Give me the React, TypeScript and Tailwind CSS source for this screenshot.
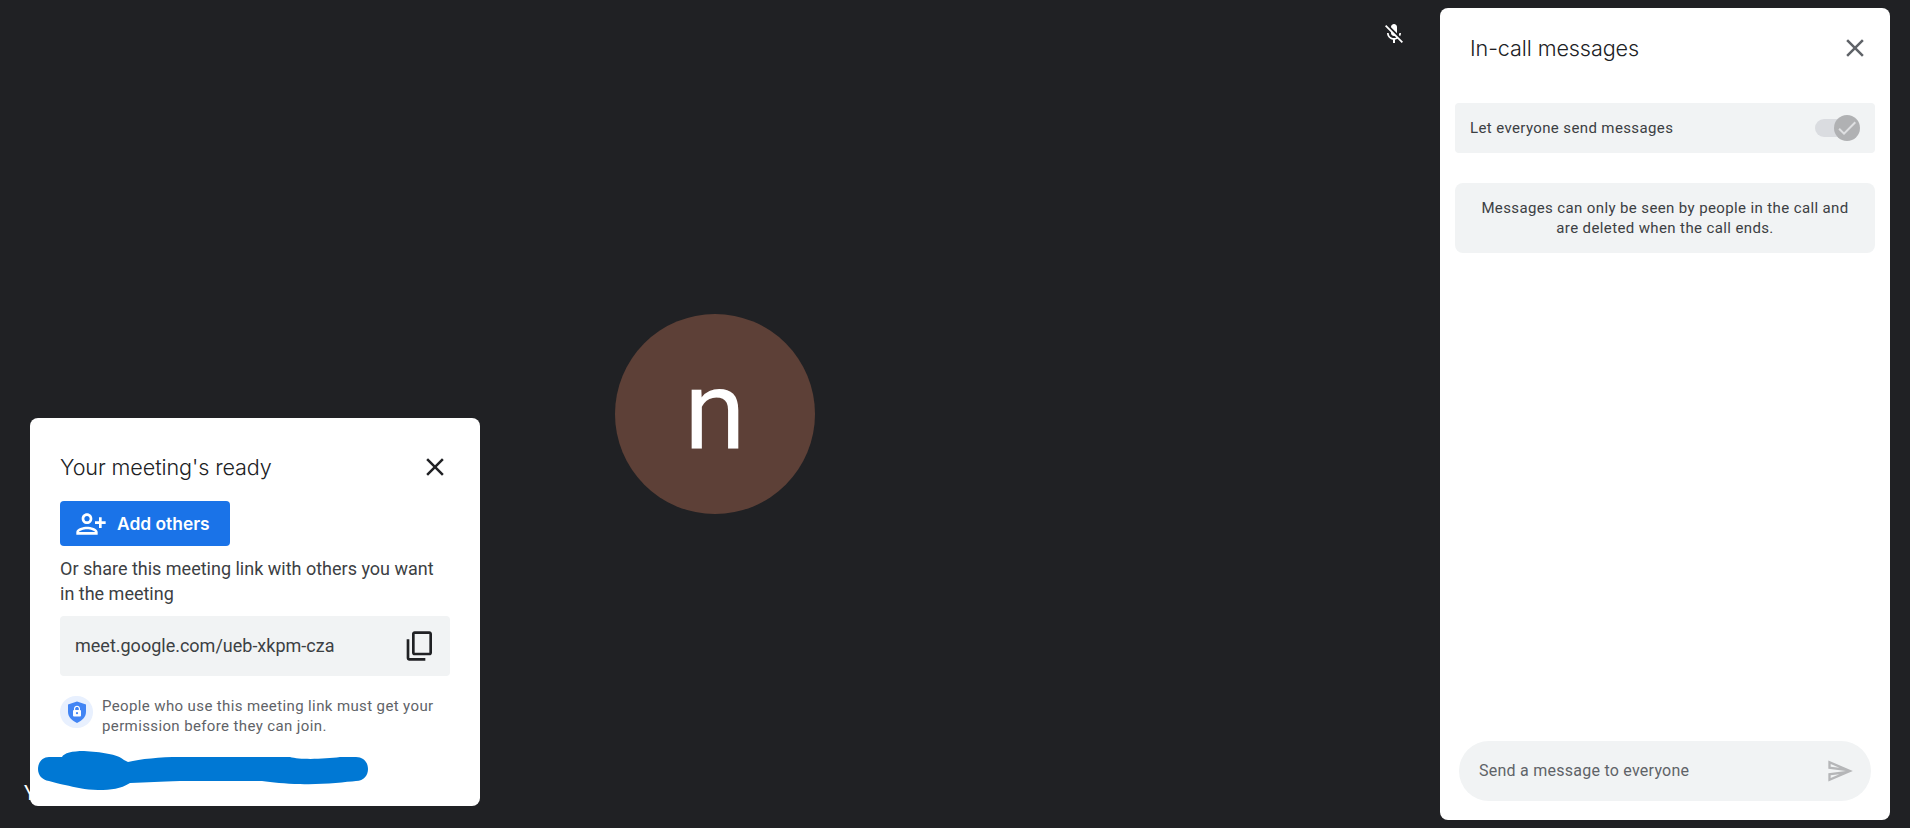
const R = "font-['Roboto',sans-serif]";
const T = "font-['Inter',sans-serif]";

function CloseIcon({ className }: { className: string }) {
  return (
    <svg viewBox="0 0 24 24" className={className} fill="currentColor">
      <path d="M19 6.41L17.59 5 12 10.59 6.41 5 5 6.41 10.59 12 5 17.59 6.41 19 12 13.41 17.59 19 19 17.59 13.41 12z" />
    </svg>
  );
}

function Scribble() {
  return (
    <svg className="absolute left-[38px] top-[751px] z-20" width="331" height="40" viewBox="38 751 331 40" fill="#0078d4">
      <path d="M49 757 L62 757 C64 753 72 751 84 751 C100 752 118 754 124 760 L128 762 C140 759 160 757 180 757 L290 757 C300 760 325 759 340 757 L356 757 C364 757 368 763 368 769 C368 775 364 781 356 781 C345 782 320 785 300 784 C285 784 272 782 262 781 L180 781 C160 782 148 782 130 783 C120 789 112 790 98 790 C85 790 75 787 65 785 C58 784 54 782 49 781 C42 780 38 775 38 769 C38 763 42 757 49 757 Z" />
    </svg>
  );
}

function MeetingCard() {
  return (
    <div className="absolute left-[30px] top-[418px] z-10 h-[388px] w-[450px] rounded-lg bg-white px-[30px] pt-[32px]">
      <div className="flex h-[34px] items-center justify-between">
        <span className={`${T} text-[21.6px] font-light tracking-[-0.1px] text-[#202124]`}>Your meeting's ready</span>
        <CloseIcon className="h-[30px] w-[30px] text-[#202124]" />
      </div>
      <div className="mt-[17px] flex h-[45px] w-[170px] items-center rounded bg-[#1a73e8] pl-[15px] text-white">
        <svg viewBox="0 0 24 24" className="h-[32px] w-[32px]" fill="currentColor">
          <path transform="translate(24 0) scale(-1 1)" d="M15 12c2.21 0 4-1.79 4-4s-1.79-4-4-4-4 1.79-4 4 1.79 4 4 4zm0-6c1.1 0 2 .9 2 2s-.9 2-2 2-2-.9-2-2 .9-2 2-2zm0 8c-2.67 0-8 1.34-8 4v2h16v-2c0-2.66-5.33-4-8-4zm-6 4c.22-.72 3.31-2 6-2 2.7 0 5.8 1.29 6 2H9zm-3-3v-3h3v-2H6V7H4v3H1v2h3v3h2z" />
        </svg>
        <span className={`${T} ml-[10px] pt-[2px] text-[17.4px] font-semibold`}>Add others</span>
      </div>
      <p className={`${R} mt-[10px] text-[18px] leading-[25px] text-[#3c4043]`}>
        Or share this meeting link with others you want in the meeting
      </p>
      <div className="mt-[10px] flex h-[60px] items-center justify-between rounded bg-[#f1f3f4] pl-[15px] pr-[14px]">
        <span className={`${R} pb-[2px] text-[18px] text-[#3c4043]`}>meet.google.com/ueb-xkpm-cza</span>
        <svg viewBox="0 0 24 24" className="h-[32px] w-[32px] text-[#202124]" fill="currentColor">
          <path transform="translate(0 24) scale(1 -1)" d="M16 1H4c-1.1 0-2 .9-2 2v14h2V3h12V1zm3 4H8c-1.1 0-2 .9-2 2v14c0 1.1.9 2 2 2h11c1.1 0 2-.9 2-2V7c0-1.1-.9-2-2-2zm0 16H8V7h11v14z" />
        </svg>
      </div>
      <div className="mt-[20px] flex items-start">
        <div className="flex h-[32px] w-[33px] shrink-0 items-center justify-center rounded-full bg-[#e8f0fe]">
          <svg viewBox="0 0 20 24" className="h-[24px] w-[20px]">
            <path d="M10 1.5 L19 4.5 V12 C19 17 15 20.8 10 23 C5 20.8 1 17 1 12 V4.5 Z" fill="#4285f4" />
            <path d="M7 10V8.6C7 6.9 8.3 5.8 10 5.8s3 1.1 3 2.8V10h-1.2V8.6c0-1-.8-1.7-1.8-1.7s-1.8.7-1.8 1.7V10z" fill="#fff" />
            <rect x="6" y="10" width="8" height="6.5" rx="1" fill="#fff" />
            <circle cx="10" cy="13.2" r="1.1" fill="#4285f4" />
          </svg>
        </div>
        <p className={`${R} ml-[9px] text-[15px] leading-[20px] tracking-[0.38px] text-[#5f6368]`}>
          People who use this meeting link must get your permission before they can join.
        </p>
      </div>
    </div>
  );
}

function MessagesPanel() {
  return (
    <aside className="my-[8px] ml-[10px] mr-[20px] flex w-[450px] shrink-0 flex-col rounded-lg bg-white px-[15px] pb-[19px]">
      <div className="flex h-[80px] items-center justify-between pl-[15px] pr-[5px]">
        <span className={`${T} text-[21.6px] font-light tracking-[-0.1px] text-[#202124]`}>In-call messages</span>
        <CloseIcon className="h-[30px] w-[30px] text-[#5f6368]" />
      </div>
      <div className="mt-[15px] flex h-[50px] items-center justify-between rounded bg-[#f1f3f4] pl-[15px] pr-[15px]">
        <span className={`${R} text-[15px] tracking-[0.38px] text-[#3c4043]`}>Let everyone send messages</span>
        <div className="flex items-center">
          <div className="h-[18px] w-[39px] rounded-full bg-[#dadce0]" />
          <div className="ml-[-20px] flex h-[26px] w-[26px] items-center justify-center rounded-full bg-[#b0b1b3]">
            <svg viewBox="0 0 24 24" className="h-[24px] w-[24px]" fill="#dfe0e2">
              <path d="M9 16.17L4.83 12l-1.42 1.41L9 19 21 7l-1.41-1.41z" />
            </svg>
          </div>
        </div>
      </div>
      <div className={`${R} mt-[30px] flex h-[70px] items-center justify-center rounded-lg bg-[#f1f3f4] px-[20px] text-center text-[15px] leading-[20px] tracking-[0.38px] text-[#3c4043]`}>
        Messages can only be seen by people in the call and are deleted when the call ends.
      </div>
      <div className="mt-auto ml-[4px] mr-[4px] flex h-[60px] items-center justify-between rounded-[30px] bg-[#f1f3f4] pl-[20px] pr-[17px]">
        <span className={`${R} text-[16px] tracking-[0.25px] text-[#5f6368]`}>Send a message to everyone</span>
        <svg viewBox="0 0 24 24" className="h-[28px] w-[28px]" fill="#b5b6b8">
          <path d="M4.01 6.03l7.51 3.22-7.52-1 .01-2.22m7.5 8.72L4 17.97v-2.22l7.51-1M2.01 3L2 10l15 2-15 2 .01 7L23 12 2.01 3z" />
        </svg>
      </div>
    </aside>
  );
}

export default function App() {
  return (
    <div className="relative flex h-[828px] w-[1910px] overflow-hidden bg-[#202124]">
      <main className="flex flex-1 items-center justify-center">
        <div className={`${R} flex h-[200px] w-[200px] items-center justify-center rounded-full bg-[#5d4037] pb-[6px] text-[112px] leading-none text-white`}>
          n
        </div>
      </main>
      <svg viewBox="0 0 24 24" className="absolute left-[1382px] top-[22px] h-[24px] w-[24px]" fill="#fff">
        <path d="M19 11h-1.7c0 .74-.16 1.43-.43 2.05l1.23 1.23c.56-.98.9-2.09.9-3.28zm-4.02.17c0-.06.02-.11.02-.17V5c0-1.66-1.34-3-3-3S9 3.34 9 5v.18l5.98 5.99zM4.27 3L3 4.27l6.01 6.01V11c0 1.66 1.33 3 2.99 3 .22 0 .44-.03.65-.08l1.66 1.66c-.71.33-1.5.52-2.31.52-2.76 0-5.3-2.1-5.3-5.1H5c0 3.41 2.72 6.23 6 6.72V21h2v-3.28c.91-.13 1.77-.45 2.54-.9L19.73 21 21 19.73 4.27 3z" />
      </svg>
      <span className={`${R} absolute left-[24px] top-[778px] text-[20px] text-white`}>Y</span>
      <MeetingCard />
      <Scribble />
      <MessagesPanel />
    </div>
  );
}
